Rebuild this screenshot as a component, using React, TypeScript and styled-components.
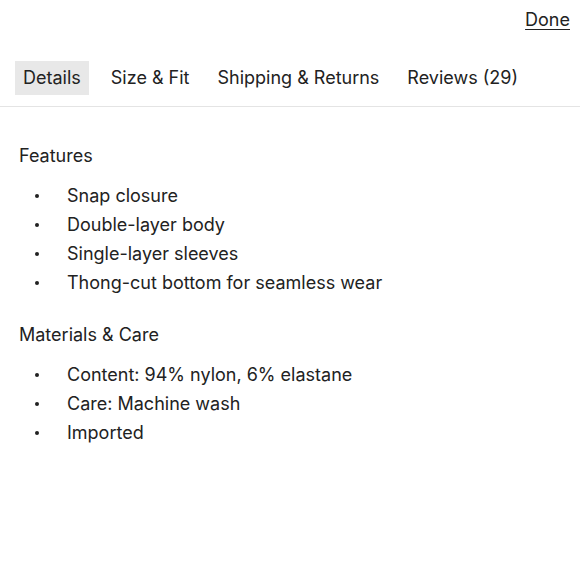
import React from "react";
import styled, { createGlobalStyle } from "styled-components";

const GlobalStyle = createGlobalStyle`
  html, body {
    margin: 0;
    padding: 0;
    background: #ffffff;
  }
  body {
    font-family: "Inter", "Noto Sans", sans-serif;
    color: #222222;
    -webkit-font-smoothing: antialiased;
  }
`;

const Page = styled.div`
  width: 580px;
  min-height: 580px;
  background: #fff;
`;

const TopBar = styled.div`
  display: flex;
  justify-content: flex-end;
  padding: 8px 10px 0;
`;

const DoneButton = styled.button`
  border: none;
  background: none;
  padding: 0;
  font-family: inherit;
  font-size: 18px;
  line-height: 24px;
  color: #222;
  text-decoration: underline;
  text-underline-offset: 3px;
  cursor: pointer;
`;

const Tabs = styled.nav`
  display: flex;
  align-items: center;
  gap: 16px;
  margin-top: 29px;
  padding: 0 15px 11px;
  border-bottom: 1px solid #e4e4e4;
`;

const Tab = styled.button<{ $active?: boolean }>`
  border: none;
  padding: ${({ $active }) => ($active ? "0 8px" : "0 6px")};
  height: 34px;
  line-height: 34px;
  font-family: inherit;
  font-size: 18px;
  color: #222;
  background: ${({ $active }) => ($active ? "#e8e8e8" : "transparent")};
  cursor: pointer;
`;

const Content = styled.div`
  padding: 37px 19px 0;
`;

const Section = styled.section`
  & + & {
    margin-top: 26px;
  }
`;

const Heading = styled.h3`
  margin: 0;
  font-size: 18px;
  font-weight: 400;
  line-height: 24px;
`;

const List = styled.ul`
  list-style: none;
  margin: 13px 0 0;
  padding: 0 0 0 16px;
`;

const Item = styled.li`
  display: flex;
  align-items: center;
  font-size: 18px;
  line-height: 29px;
`;

const Dot = styled.span`
  width: 4px;
  height: 4px;
  border-radius: 50%;
  background: #222;
  margin-right: 28px;
  flex-shrink: 0;
`;

const tabs = ["Details", "Size & Fit", "Shipping & Returns", "Reviews (29)"];

const sections = [
  {
    title: "Features",
    items: [
      "Snap closure",
      "Double-layer body",
      "Single-layer sleeves",
      "Thong-cut bottom for seamless wear",
    ],
  },
  {
    title: "Materials & Care",
    items: ["Content: 94% nylon, 6% elastane", "Care: Machine wash", "Imported"],
  },
];

export default function App() {
  return (
    <>
      <GlobalStyle />
      <Page>
        <TopBar>
          <DoneButton>Done</DoneButton>
        </TopBar>
        <Tabs>
          {tabs.map((t, i) => (
            <Tab key={t} $active={i === 0}>
              {t}
            </Tab>
          ))}
        </Tabs>
        <Content>
          {sections.map((s) => (
            <Section key={s.title}>
              <Heading>{s.title}</Heading>
              <List>
                {s.items.map((it) => (
                  <Item key={it}>
                    <Dot />
                    {it}
                  </Item>
                ))}
              </List>
            </Section>
          ))}
        </Content>
      </Page>
    </>
  );
}
